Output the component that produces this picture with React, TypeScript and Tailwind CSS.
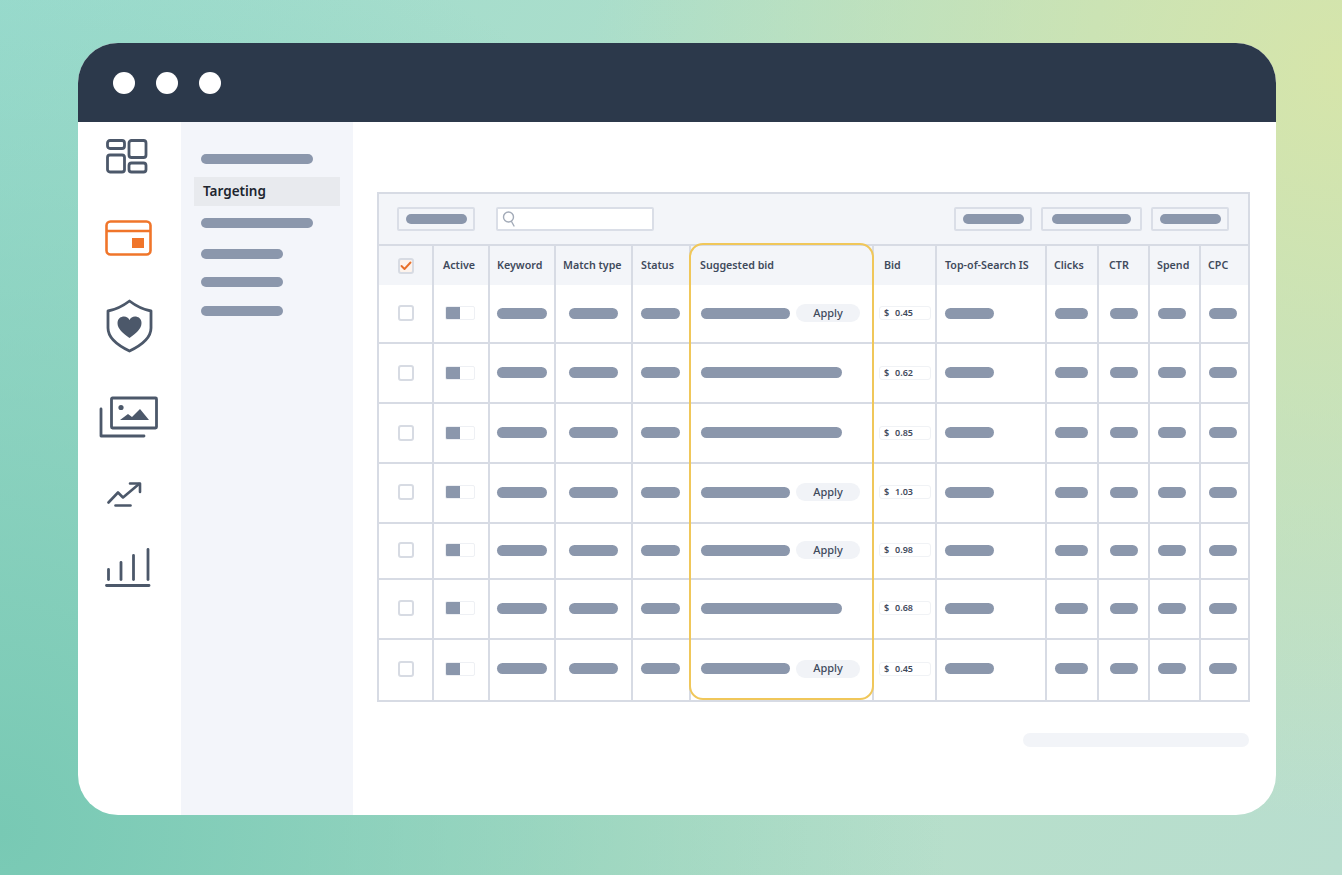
const GRID = 'grid grid-cols-[55px_56px_66px_77px_58px_183px_63px_110px_52px_51px_51px_47px]';
const LINE = 'border-[#d7dbe4]';

const headers = [
    { label: 'Active', cls: 'pl-[9px]' },
    { label: 'Keyword', cls: 'pl-[7px]' },
    { label: 'Match type', cls: 'pl-[7px]' },
    { label: 'Status', cls: 'pl-[8px]' },
    { label: 'Suggested bid', cls: 'pl-[9px]' },
    { label: 'Bid', cls: 'pl-[10px]' },
    { label: 'Top-of-Search IS', cls: 'pl-[8px]' },
    { label: 'Clicks', cls: 'pl-[7px]' },
    { label: 'CTR', cls: 'pl-[10px]' },
    { label: 'Spend', cls: 'pl-[7px]' },
    { label: 'CPC', cls: 'pl-[7px]' },
];

// cells in the lower rows sit a little above the middle of the row
const rows = [
    { height: 'h-[59px]', pad: 'pb-[1px]', bid: '0.45', apply: true },
    { height: 'h-[60px]', pad: 'pb-[1px]', bid: '0.62', apply: false },
    { height: 'h-[60px]', pad: 'pb-[1px]', bid: '0.85', apply: false },
    { height: 'h-[60px]', pad: 'pb-[2px]', bid: '1.03', apply: true },
    { height: 'h-[56px]', pad: 'pb-[2px]', bid: '0.98', apply: true },
    { height: 'h-[60px]', pad: 'pb-[2px]', bid: '0.68', apply: false },
    { height: 'h-[60px]', pad: 'pb-[3px]', bid: '0.45', apply: true, last: true },
];

function Bar({ className }: { className: string }) {
    return <div className={`h-[11px] rounded-full bg-[#8b97ac] ${className}`} />;
}

function ToolbarButton({ width, bar }: { width: string; bar: string }) {
    return (
        <div className={`flex h-[24px] items-center justify-center rounded-[2px] border-2 border-[#dadee7] ${width}`}>
            <div className={`h-[10px] rounded-full bg-[#8b97ac] ${bar}`} />
        </div>
    );
}

function Cell({ className, children, last }: { className?: string; children?: React.ReactNode; last?: boolean }) {
    return (
        <div className={`flex items-center ${last ? '' : `border-r-2 ${LINE}`} ${className ?? ''}`}>
            {children}
        </div>
    );
}

function Row({ row }: { row: (typeof rows)[number] }) {
    return (
        <div className={`${GRID} ${row.height} ${row.last ? '' : `border-b-2 ${LINE}`}`}>
            <Cell className={`pl-[19px] ${row.pad}`}>
                <div className="h-[16px] w-[16px] rounded-[3px] border-2 border-[#d7dbe3] bg-white" />
            </Cell>
            <Cell className={`pl-[11px] ${row.pad}`}>
                <div className="flex h-[14px] w-[30px] rounded-[2px] border border-[#eef0f4]">
                    <div className="w-[14px] rounded-l-[1px] bg-[#8b97ac]" />
                </div>
            </Cell>
            <Cell className={`pl-[7px] ${row.pad}`}><Bar className="w-[50px]" /></Cell>
            <Cell className={`pl-[13px] ${row.pad}`}><Bar className="w-[49px]" /></Cell>
            <Cell className={`pl-[8px] ${row.pad}`}><Bar className="w-[39px]" /></Cell>
            <Cell className={`pl-[10px] ${row.pad}`}>
                {row.apply ? (
                    <>
                        <Bar className="w-[89px]" />
                        <div className="ml-[6px] flex h-[18px] w-[64px] items-center justify-center rounded-full bg-[#f1f3f7] text-[11px] font-medium text-[#3f4a5c]">
                            Apply
                        </div>
                    </>
                ) : (
                    <Bar className="w-[141px]" />
                )}
            </Cell>
            <Cell className={`pl-[5px] ${row.pad}`}>
                <div className="flex h-[14px] w-[52px] items-center rounded-[3px] border border-[#f0f2f5] pl-[4px] text-[9px] font-semibold text-[#3f4a5c]">
                    <span className="w-[11px]">$</span>
                    <span>{row.bid}</span>
                </div>
            </Cell>
            <Cell className={`pl-[8px] ${row.pad}`}><Bar className="w-[49px]" /></Cell>
            <Cell className={`pl-[8px] ${row.pad}`}><Bar className="w-[33px]" /></Cell>
            <Cell className={`pl-[11px] ${row.pad}`}><Bar className="w-[28px]" /></Cell>
            <Cell className={`pl-[8px] ${row.pad}`}><Bar className="w-[28px]" /></Cell>
            <Cell className={`pl-[8px] ${row.pad}`} last><Bar className="w-[28px]" /></Cell>
        </div>
    );
}

function Rail() {
    const slate = '#4c586a';
    return (
        <div className="flex w-[103px] shrink-0 flex-col items-start pt-[17px]">
            <svg className="ml-[28px]" width="42" height="35" viewBox="0 0 42 35" fill="none" stroke={slate} strokeWidth="2.8">
                <rect x="1.5" y="1.5" width="17" height="8" rx="2.5" />
                <rect x="1.5" y="16" width="17" height="17" rx="2.5" />
                <rect x="23" y="1.5" width="17" height="17" rx="2.5" />
                <rect x="23" y="24" width="17" height="9" rx="2.5" />
            </svg>
            <svg className="ml-[27px] mt-[46px]" width="47" height="36" viewBox="0 0 47 36" fill="none" stroke="#f0752a" strokeWidth="2.6">
                <rect x="1.5" y="1.5" width="44" height="33" rx="4" />
                <path d="M1.5 11H45.5" />
                <rect x="27" y="18" width="12" height="10" fill="#f0752a" stroke="none" />
            </svg>
            <svg className="ml-[28px] mt-[43px]" width="47" height="54" viewBox="0 0 47 54" fill="none" stroke={slate} strokeWidth="2.8" strokeLinejoin="round">
                <path d="M23.5 2 C30 7 37 10.5 45 12 V29 C45 39 34 47 23.5 52 C13 47 2 39 2 29 V12 C10 10.5 17 7 23.5 2Z" />
                <path d="M23.5 39 C17 34 11.5 30 11.5 24 C11.5 19.5 15 17.5 18 17.5 C20.5 17.5 22.5 19 23.5 21 C24.5 19 26.5 17.5 29 17.5 C32 17.5 35.5 19.5 35.5 24 C35.5 30 30 34 23.5 39Z" fill={slate} stroke="none" />
            </svg>
            <svg className="ml-[21px] mt-[43px]" width="60" height="42" viewBox="0 0 60 42" fill="none" stroke={slate} strokeWidth="2.8" strokeLinecap="round" strokeLinejoin="round">
                <rect x="12.5" y="2" width="45" height="30" rx="1" />
                <path d="M2 13V40H45" />
                <circle cx="22" cy="11.5" r="2.6" fill={slate} stroke="none" />
                <path d="M21 24L29 18L33 21L41 13L50 24Z" fill={slate} stroke="none" />
            </svg>
            <svg className="ml-[29px] mt-[43px]" width="35" height="27" viewBox="0 0 35 27" fill="none" stroke={slate} strokeWidth="2.6" strokeLinecap="round" strokeLinejoin="round">
                <path d="M1.5 21.5L11 11.5L16 16.5L32 3" />
                <path d="M23 2.5H33V11" />
                <path d="M8.5 24.5H23.5" />
            </svg>
            <svg className="ml-[27px] mt-[40px]" width="46" height="40" viewBox="0 0 46 40" fill="none" stroke={slate} strokeWidth="2.8" strokeLinecap="round">
                <path d="M3.5 21.5V31.5" />
                <path d="M16 14.5V31.5" />
                <path d="M28.5 7.5V31.5" />
                <path d="M43 1.5V31.5" />
                <path d="M1.5 37.5H44" />
            </svg>
        </div>
    );
}

function Sidebar() {
    return (
        <div className="flex w-[172px] shrink-0 flex-col bg-[#f3f5fa] pt-[32px]">
            <div className="ml-[20px] h-[10px] w-[112px] rounded-full bg-[#8b97ac]" />
            <div className="ml-[13px] mt-[13px] flex h-[29px] w-[146px] items-center bg-[#e8eaee] pb-[1px] pl-[9px] text-[13.5px] font-semibold text-[#20252e]">
                Targeting
            </div>
            <div className="ml-[20px] mt-[12px] h-[10px] w-[112px] rounded-full bg-[#8b97ac]" />
            <div className="ml-[20px] mt-[21px] h-[10px] w-[82px] rounded-full bg-[#8b97ac]" />
            <div className="ml-[20px] mt-[18px] h-[10px] w-[82px] rounded-full bg-[#8b97ac]" />
            <div className="ml-[20px] mt-[19px] h-[10px] w-[82px] rounded-full bg-[#8b97ac]" />
        </div>
    );
}

function Table() {
    return (
        <div className={`w-[873px] border-2 ${LINE}`}>
            <div className={`flex h-[52px] items-center border-b-2 bg-[#f3f5f9] pl-[18px] pr-[19px] ${LINE}`}>
                <ToolbarButton width="w-[78px]" bar="w-[61px]" />
                <div className="ml-[21px] flex h-[24px] w-[158px] items-center rounded-[2px] border-2 border-[#dadee7] bg-white pl-[4px]">
                    <svg width="15" height="16" viewBox="0 0 15 16" fill="none" stroke="#a3abb8" strokeWidth="1.4" strokeLinecap="round">
                        <circle cx="6.5" cy="6" r="5" />
                        <path d="M9.5 10.5L12 15" />
                    </svg>
                </div>
                <div className="ml-auto flex gap-[9px]">
                    <ToolbarButton width="w-[78px]" bar="w-[61px]" />
                    <ToolbarButton width="w-[101px]" bar="w-[79px]" />
                    <ToolbarButton width="w-[78px]" bar="w-[61px]" />
                </div>
            </div>
            <div className="relative">
                <div className={`${GRID} h-[39px] bg-[#f3f5f9]`}>
                    <Cell className="pl-[19px]">
                        <div className="flex h-[16px] w-[16px] items-center justify-center rounded-[3px] border-2 border-[#d7dbe3] bg-[#fdf3ec]">
                            <svg width="12" height="10" viewBox="0 0 12 10" fill="none" stroke="#e8702a" strokeWidth="1.9" strokeLinecap="round" strokeLinejoin="round">
                                <path d="M1.5 5L4.5 8L10.5 1.5" />
                            </svg>
                        </div>
                    </Cell>
                    {headers.map((h, i) => (
                        <Cell key={h.label} className={`text-[10.7px] font-semibold text-[#3f4a5c] ${h.cls}`} last={i === headers.length - 1}>
                            {h.label}
                        </Cell>
                    ))}
                </div>
                {rows.map((row, i) => (
                    <Row key={i} row={row} />
                ))}
                <div className="pointer-events-none absolute left-[310px] top-[-3px] h-[457px] w-[185px] rounded-[14px] border-2 border-[#f0c75a]" />
            </div>
        </div>
    );
}

export default function App() {
    return (
        <div
            className="h-[875px] w-full overflow-hidden pl-[78px] pt-[43px] bg-[radial-gradient(circle_at_100%_8%,#d6e5aa_0%,transparent_48%),radial-gradient(circle_at_0%_95%,#78c9b4_0%,transparent_60%),linear-gradient(120deg,#9cdccf,#b5dfc8_60%,#b9decf)]"
            style={{ fontFamily: '"Noto Sans", "Open Sans", sans-serif' }}
        >
            <div className="flex h-[772px] w-[1198px] flex-col overflow-hidden rounded-[40px] bg-white">
                <div className="flex h-[79px] shrink-0 items-center gap-[21px] bg-[#2c394b] pl-[35px]">
                    <div className="h-[22px] w-[22px] rounded-full bg-white" />
                    <div className="h-[22px] w-[22px] rounded-full bg-white" />
                    <div className="h-[22px] w-[22px] rounded-full bg-white" />
                </div>
                <div className="flex flex-1">
                    <Rail />
                    <Sidebar />
                    <div className="flex flex-1 flex-col pl-[24px] pt-[70px]">
                        <Table />
                        <div className="ml-[646px] mt-[31px] h-[14px] w-[226px] rounded-full bg-[#f2f4f8]" />
                    </div>
                </div>
            </div>
        </div>
    );
}
